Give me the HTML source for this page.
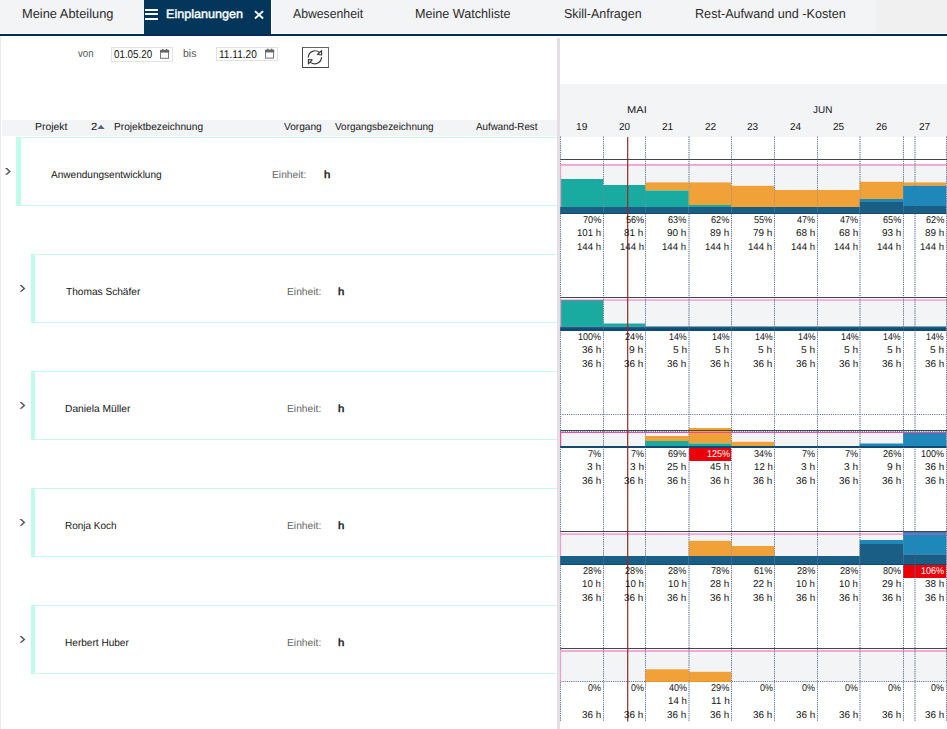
<!DOCTYPE html>
<html lang="de"><head><meta charset="utf-8"><title>Einplanungen</title>
<style>
html,body{margin:0;padding:0;background:#fff;}
#app{position:relative;width:947px;height:729px;overflow:hidden;background:#fff;font-family:"Liberation Sans", sans-serif;}
#app div{position:absolute;}
#app>div{left:0;top:0;width:0;height:0;}
#app span{position:absolute;white-space:pre;line-height:1;transform-origin:0 0;text-rendering:geometricPrecision;}
#app svg{position:absolute;left:0;top:0;overflow:visible;}
</style></head><body>
<div id="app">
<div class="frame">
<div style="left:0px;top:36px;width:1px;height:693px;background:#ececec;"></div>
<div style="left:557px;top:38px;width:3px;height:691px;background:#e6dee7;"></div>
</div>
<div class="tabbar">
<div style="left:0px;top:0px;width:876px;height:33px;background:#f3f4f6;"></div>
<div style="left:876px;top:0px;width:71px;height:33px;background:#f0f0f0;"></div>
<div style="left:0px;top:34px;width:947px;height:2px;background:#032d56;"></div>
<div style="left:144px;top:0px;width:127px;height:34px;background:#04365c;"></div>
<div style="left:271px;top:0px;width:0.7px;height:33px;background:#fff;"></div>
<div style="left:144.9px;top:8.9px;width:13.2px;height:2.1px;background:#fff;"></div>
<div style="left:144.9px;top:13.1px;width:13.2px;height:2.1px;background:#fff;"></div>
<div style="left:144.9px;top:17.9px;width:13.2px;height:2.1px;background:#fff;"></div>
<svg class="icons" width="947" height="729" viewBox="0 0 947 729" fill="none"><path d="M255 11.1 L263.1 18.5 M263.1 11.1 L255 18.5" stroke="#fff" stroke-width="1.9"/></svg>
<span style="left:21.60px;top:7.02px;font-size:13px;font-weight:400;color:#2b2b2b;transform:scaleX(0.9882)">Meine Abteilung</span>
<span style="left:165.81px;top:8.02px;font-size:12.2px;font-weight:400;color:#fff;-webkit-text-stroke:0.4px #fff;transform:scaleX(1.0345)">Einplanungen</span>
<span style="left:293.30px;top:7.02px;font-size:13px;font-weight:400;color:#2b2b2b;transform:scaleX(0.9411)">Abwesenheit</span>
<span style="left:415.32px;top:7.02px;font-size:13px;font-weight:400;color:#2b2b2b;transform:scaleX(0.9695)">Meine Watchliste</span>
<span style="left:564.11px;top:7.02px;font-size:13px;font-weight:400;color:#2b2b2b;transform:scaleX(0.9588)">Skill-Anfragen</span>
<span style="left:694.61px;top:7.02px;font-size:13px;font-weight:400;color:#2b2b2b;transform:scaleX(0.9706)">Rest-Aufwand und -Kosten</span>
</div>
<div class="toolbar">
<div style="left:110.5px;top:47px;width:62.3px;height:14.9px;box-sizing:border-box;border:1.1px solid #e2e2e2;background:#fff"></div>
<div style="left:215.8px;top:46.7px;width:62.3px;height:14.5px;box-sizing:border-box;border:1.1px solid #e2e2e2;background:#fff"></div>
<div style="left:302.1px;top:47.2px;width:26.5px;height:20.7px;box-sizing:border-box;border:1.2px solid #444;border-top-color:#666;border-right-color:#6a6a6a;background:#fff"></div>
<svg class="icons" width="947" height="729" viewBox="0 0 947 729" fill="none"><g>
<rect x="160.6" y="50.6" width="8" height="7.7" stroke="#6a6a6a" stroke-width="0.95" fill="#fff"/>
<rect x="160.05" y="49.9" width="9.1" height="2.7" fill="#646464"/>
<rect x="162" y="48.9" width="1.5" height="2" fill="#646464"/><rect x="165.8" y="48.9" width="1.5" height="2" fill="#646464"/>
</g>
<g>
<rect x="265.6" y="50.4" width="8" height="7.7" stroke="#6a6a6a" stroke-width="0.95" fill="#fff"/>
<rect x="265.05" y="49.7" width="9.1" height="2.7" fill="#646464"/>
<rect x="267" y="48.7" width="1.5" height="2" fill="#646464"/><rect x="270.8" y="48.7" width="1.5" height="2" fill="#646464"/>
</g>
<g stroke="#383838" stroke-width="1.15" fill="none" stroke-linejoin="round" stroke-linecap="round">
<path d="M308.3 57 A6.8 6.8 0 0 1 319.3 52.3"/>
<path d="M321.6 50.6 V55 L317.6 54.5 Z" fill="#fff"/>
<path d="M321.5 57.6 A6.8 6.8 0 0 1 310.6 62.4"/>
<path d="M308.4 63.8 V59.6 L312.2 59.8 Z" fill="#fff"/>
</g></svg>
<span style="left:78.20px;top:49.02px;font-size:11px;font-weight:400;color:#555;transform:scaleX(0.8821)">von</span>
<span style="left:182.95px;top:49.02px;font-size:11px;font-weight:400;color:#555;transform:scaleX(0.9516)">bis</span>
<span style="left:114.09px;top:50.02px;font-size:11.3px;font-weight:400;color:#161616;transform:scaleX(0.8673)">01.05.20</span>
<span style="left:219.37px;top:50.02px;font-size:11.3px;font-weight:400;color:#161616;transform:scaleX(0.8954)">11.11.20</span>
</div>
<div class="table">
<div style="left:2px;top:120px;width:555px;height:16px;background:#f3f4f6;"></div>
<div style="left:16px;top:137px;width:541px;height:1px;background:#cbf8ec;"></div>
<div style="left:16px;top:205px;width:541px;height:1px;background:#cbf8ec;"></div>
<div style="left:16px;top:137px;width:4.9px;height:69px;background:#c0fce9;"></div>
<div style="left:31px;top:254px;width:526px;height:1px;background:#cbf8ec;"></div>
<div style="left:31px;top:322px;width:526px;height:1px;background:#cbf8ec;"></div>
<div style="left:30.7px;top:254px;width:4.2px;height:69px;background:#c0fce9;"></div>
<div style="left:31px;top:371px;width:526px;height:1px;background:#cbf8ec;"></div>
<div style="left:31px;top:439px;width:526px;height:1px;background:#cbf8ec;"></div>
<div style="left:30.7px;top:371px;width:4.2px;height:69px;background:#c0fce9;"></div>
<div style="left:31px;top:488px;width:526px;height:1px;background:#cbf8ec;"></div>
<div style="left:31px;top:556px;width:526px;height:1px;background:#cbf8ec;"></div>
<div style="left:30.7px;top:488px;width:4.2px;height:69px;background:#c0fce9;"></div>
<div style="left:31px;top:605px;width:526px;height:1px;background:#cbf8ec;"></div>
<div style="left:31px;top:673px;width:526px;height:1px;background:#cbf8ec;"></div>
<div style="left:30.7px;top:605px;width:4.2px;height:69px;background:#c0fce9;"></div>
<svg class="icons" width="947" height="729" viewBox="0 0 947 729" fill="none"><g fill="#5a5a5a">
<path d="M5 167.9 H7.2 L10.9 171.4 L7.2 174.8 H5 L8.7 171.4 Z"/>
<path d="M19.5 284.9 H21.7 L25.4 288.4 L21.7 291.8 H19.5 L23.2 288.4 Z"/>
<path d="M19.5 401.9 H21.7 L25.4 405.4 L21.7 408.8 H19.5 L23.2 405.4 Z"/>
<path d="M19.5 518.9 H21.7 L25.4 522.4 L21.7 525.8 H19.5 L23.2 522.4 Z"/>
<path d="M19.5 635.9 H21.7 L25.4 639.4 L21.7 642.8 H19.5 L23.2 639.4 Z"/>
</g>
<path d="M97.3 129 L101 124.7 L104.7 129 Z" fill="#5a647e"/></svg>
<span style="left:34.68px;top:123.02px;font-size:10.3px;font-weight:400;color:#161616;transform:scaleX(1.0132)">Projekt</span>
<span style="left:91.17px;top:123.02px;font-size:10.3px;font-weight:400;color:#161616;transform:scaleX(1.0977)">2</span>
<span style="left:113.71px;top:123.02px;font-size:10.3px;font-weight:400;color:#161616;transform:scaleX(0.9844)">Projektbezeichnung</span>
<span style="left:284.30px;top:123.02px;font-size:10.3px;font-weight:400;color:#161616;transform:scaleX(0.9843)">Vorgang</span>
<span style="left:335.40px;top:123.02px;font-size:10.3px;font-weight:400;color:#161616;transform:scaleX(0.9668)">Vorgangsbezeichnung</span>
<span style="left:476.30px;top:123.02px;font-size:10.3px;font-weight:400;color:#161616;transform:scaleX(0.9501)">Aufwand-Rest</span>
<span style="left:51.20px;top:171.02px;font-size:10.3px;font-weight:400;color:#161616;transform:scaleX(0.9761)">Anwendungsentwicklung</span>
<span style="left:272.00px;top:171.02px;font-size:10.3px;font-weight:400;color:#666;transform:scaleX(0.9994)">Einheit:</span>
<span style="left:323.59px;top:171.02px;font-size:10.3px;font-weight:400;color:#161616;-webkit-text-stroke:0.4px #161616;transform:scaleX(1.1096)">h</span>
<span style="left:65.64px;top:288.02px;font-size:10.3px;font-weight:400;color:#161616;transform:scaleX(0.9834)">Thomas Schäfer</span>
<span style="left:286.60px;top:288.02px;font-size:10.3px;font-weight:400;color:#666;transform:scaleX(0.9994)">Einheit:</span>
<span style="left:338.19px;top:288.02px;font-size:10.3px;font-weight:400;color:#161616;-webkit-text-stroke:0.4px #161616;transform:scaleX(1.1096)">h</span>
<span style="left:65.00px;top:405.02px;font-size:10.3px;font-weight:400;color:#161616;transform:scaleX(0.9942)">Daniela Müller</span>
<span style="left:286.60px;top:405.02px;font-size:10.3px;font-weight:400;color:#666;transform:scaleX(0.9994)">Einheit:</span>
<span style="left:338.19px;top:405.02px;font-size:10.3px;font-weight:400;color:#161616;-webkit-text-stroke:0.4px #161616;transform:scaleX(1.1096)">h</span>
<span style="left:65.02px;top:522.02px;font-size:10.3px;font-weight:400;color:#161616;transform:scaleX(0.9679)">Ronja Koch</span>
<span style="left:286.60px;top:522.02px;font-size:10.3px;font-weight:400;color:#666;transform:scaleX(0.9994)">Einheit:</span>
<span style="left:338.19px;top:522.02px;font-size:10.3px;font-weight:400;color:#161616;-webkit-text-stroke:0.4px #161616;transform:scaleX(1.1096)">h</span>
<span style="left:65.01px;top:639.02px;font-size:10.3px;font-weight:400;color:#161616;transform:scaleX(0.9782)">Herbert Huber</span>
<span style="left:286.60px;top:639.02px;font-size:10.3px;font-weight:400;color:#666;transform:scaleX(0.9994)">Einheit:</span>
<span style="left:338.19px;top:639.02px;font-size:10.3px;font-weight:400;color:#161616;-webkit-text-stroke:0.4px #161616;transform:scaleX(1.1096)">h</span>
</div>
<div class="chart">
<div style="left:560px;top:84px;width:387px;height:53px;background:#f3f4f6;"></div>
<div style="left:688.8px;top:448px;width:42.5px;height:12.7px;background:#ec0008;"></div>
<div style="left:903.3px;top:565px;width:43px;height:12.7px;background:#ec0008;"></div>
<svg class="plot" width="947" height="729" viewBox="0 0 947 729">
<rect x="560.3" y="164.5" width="387" height="49.5" fill="#f3f4f6"/>
<rect x="560.3" y="299.7" width="387" height="31.30000000000001" fill="#f3f4f6"/>
<rect x="560.3" y="432.5" width="387" height="15.5" fill="#f3f4f6"/>
<rect x="560.3" y="533.7" width="387" height="31.299999999999955" fill="#f3f4f6"/>
<rect x="560.3" y="650.5" width="387" height="31.5" fill="#f3f4f6"/>
<line x1="560.5" y1="136.6" x2="560.5" y2="721.5" stroke="#66729a" stroke-width="1" stroke-dasharray="1.1 1.1"/>
<line x1="603.5" y1="136.6" x2="603.5" y2="721.5" stroke="#66729a" stroke-width="1" stroke-dasharray="1.1 1.1"/>
<line x1="645.5" y1="136.6" x2="645.5" y2="721.5" stroke="#66729a" stroke-width="1" stroke-dasharray="1.1 1.1"/>
<line x1="689.0" y1="136.6" x2="689.0" y2="721.5" stroke="#66729a" stroke-width="1" stroke-dasharray="1.1 1.1"/>
<line x1="731.5" y1="136.6" x2="731.5" y2="721.5" stroke="#66729a" stroke-width="1" stroke-dasharray="1.1 1.1"/>
<line x1="774.5" y1="136.6" x2="774.5" y2="721.5" stroke="#66729a" stroke-width="1" stroke-dasharray="1.1 1.1"/>
<line x1="817.5" y1="136.6" x2="817.5" y2="721.5" stroke="#66729a" stroke-width="1" stroke-dasharray="1.1 1.1"/>
<line x1="860.0" y1="136.6" x2="860.0" y2="721.5" stroke="#66729a" stroke-width="1" stroke-dasharray="1.1 1.1"/>
<line x1="903.5" y1="136.6" x2="903.5" y2="721.5" stroke="#66729a" stroke-width="1" stroke-dasharray="1.1 1.1"/>
<line x1="946.5" y1="136.6" x2="946.5" y2="721.5" stroke="#66729a" stroke-width="1" stroke-dasharray="1.1 1.1"/>
<line x1="915.0" y1="136.6" x2="915.0" y2="721.5" stroke="#66729a" stroke-width="1" stroke-dasharray="1.1 1.1"/>
<line x1="560.3" y1="414.5" x2="947" y2="414.5" stroke="#66729a" stroke-width="1" stroke-dasharray="1.1 1.1"/>
<line x1="560.3" y1="431.5" x2="947" y2="431.5" stroke="#66729a" stroke-width="1" stroke-dasharray="1.1 1.1"/>
<line x1="560.3" y1="681.5" x2="947" y2="681.5" stroke="#66729a" stroke-width="1" stroke-dasharray="1.1 1.1"/>
<rect x="560.2" y="179" width="43.05" height="28.0" fill="#1aaba0"/>
<rect x="560.2" y="207" width="43.05" height="7.0" fill="#1a5d85"/>
<rect x="560.2" y="213" width="43.05" height="1" fill="#0f4a73"/>
<rect x="603.2" y="185" width="42.05" height="22.0" fill="#1aaba0"/>
<rect x="603.2" y="207" width="42.05" height="7.0" fill="#1a5d85"/>
<rect x="603.2" y="213" width="42.05" height="1" fill="#0f4a73"/>
<rect x="645.2" y="182.4" width="43.55" height="8.1" fill="#f0a137"/>
<rect x="645.2" y="190.5" width="43.55" height="16.5" fill="#1aaba0"/>
<rect x="645.2" y="207" width="43.55" height="7.0" fill="#1a5d85"/>
<rect x="645.2" y="213" width="43.55" height="1" fill="#0f4a73"/>
<rect x="688.7" y="182.4" width="42.55" height="22.6" fill="#f0a137"/>
<rect x="688.7" y="205" width="42.55" height="2.0" fill="#1aaba0"/>
<rect x="688.7" y="207" width="42.55" height="7.0" fill="#1a5d85"/>
<rect x="688.7" y="213" width="42.55" height="1" fill="#0f4a73"/>
<rect x="731.2" y="185.8" width="43.05" height="21.2" fill="#f0a137"/>
<rect x="731.2" y="207" width="43.05" height="7.0" fill="#1a5d85"/>
<rect x="731.2" y="213" width="43.05" height="1" fill="#0f4a73"/>
<rect x="774.2" y="190" width="43.05" height="17.0" fill="#f0a137"/>
<rect x="774.2" y="207" width="43.05" height="7.0" fill="#1a5d85"/>
<rect x="774.2" y="213" width="43.05" height="1" fill="#0f4a73"/>
<rect x="817.2" y="190" width="42.55" height="17.0" fill="#f0a137"/>
<rect x="817.2" y="207" width="42.55" height="7.0" fill="#1a5d85"/>
<rect x="817.2" y="213" width="42.55" height="1" fill="#0f4a73"/>
<rect x="859.7" y="181.8" width="43.55" height="17.2" fill="#f0a137"/>
<rect x="859.7" y="199" width="43.55" height="3.0" fill="#1d88b9"/>
<rect x="859.7" y="202" width="43.55" height="12.0" fill="#1a5d85"/>
<rect x="859.7" y="213" width="43.55" height="1" fill="#0f4a73"/>
<rect x="903.2" y="182.4" width="43.05" height="3.4" fill="#f0a137"/>
<rect x="903.2" y="185.8" width="43.05" height="20.2" fill="#1d88b9"/>
<rect x="903.2" y="206" width="43.05" height="8.0" fill="#1a5d85"/>
<rect x="903.2" y="213" width="43.05" height="1" fill="#0f4a73"/>
<rect x="560.2" y="300" width="43.05" height="26.5" fill="#1aaba0"/>
<rect x="560.2" y="326.5" width="43.05" height="4.5" fill="#1a5d85"/>
<rect x="560.2" y="328.4" width="43.05" height="2.6" fill="#0f4a73"/>
<rect x="603.2" y="323.5" width="42.05" height="3.0" fill="#1aaba0"/>
<rect x="603.2" y="326.5" width="42.05" height="4.5" fill="#1a5d85"/>
<rect x="603.2" y="328.4" width="42.05" height="2.6" fill="#0f4a73"/>
<rect x="645.2" y="326.5" width="43.55" height="4.5" fill="#1a5d85"/>
<rect x="645.2" y="328.4" width="43.55" height="2.6" fill="#0f4a73"/>
<rect x="688.7" y="326.5" width="42.55" height="4.5" fill="#1a5d85"/>
<rect x="688.7" y="328.4" width="42.55" height="2.6" fill="#0f4a73"/>
<rect x="731.2" y="326.5" width="43.05" height="4.5" fill="#1a5d85"/>
<rect x="731.2" y="328.4" width="43.05" height="2.6" fill="#0f4a73"/>
<rect x="774.2" y="326.5" width="43.05" height="4.5" fill="#1a5d85"/>
<rect x="774.2" y="328.4" width="43.05" height="2.6" fill="#0f4a73"/>
<rect x="817.2" y="326.5" width="42.55" height="4.5" fill="#1a5d85"/>
<rect x="817.2" y="328.4" width="42.55" height="2.6" fill="#0f4a73"/>
<rect x="859.7" y="326.5" width="43.55" height="4.5" fill="#1a5d85"/>
<rect x="859.7" y="328.4" width="43.55" height="2.6" fill="#0f4a73"/>
<rect x="903.2" y="326.5" width="43.05" height="4.5" fill="#1a5d85"/>
<rect x="903.2" y="328.4" width="43.05" height="2.6" fill="#0f4a73"/>
<rect x="560.2" y="446" width="43.05" height="2.0" fill="#1a5d85"/>
<rect x="560.2" y="446.1" width="43.05" height="1.9" fill="#0f4a73"/>
<rect x="603.2" y="446" width="42.05" height="2.0" fill="#1a5d85"/>
<rect x="603.2" y="446.1" width="42.05" height="1.9" fill="#0f4a73"/>
<rect x="645.2" y="436" width="43.55" height="5.0" fill="#f0a137"/>
<rect x="645.2" y="441" width="43.55" height="5.1" fill="#1aaba0"/>
<rect x="645.2" y="446.1" width="43.55" height="1.9" fill="#1a5d85"/>
<rect x="645.2" y="446.1" width="43.55" height="1.9" fill="#0f4a73"/>
<rect x="688.7" y="428" width="42.55" height="15.5" fill="#f0a137"/>
<rect x="688.7" y="443.5" width="42.55" height="2.5" fill="#1aaba0"/>
<rect x="688.7" y="446" width="42.55" height="2.0" fill="#1a5d85"/>
<rect x="688.7" y="446.1" width="42.55" height="1.9" fill="#0f4a73"/>
<rect x="731.2" y="441.8" width="43.05" height="4.2" fill="#f0a137"/>
<rect x="731.2" y="446" width="43.05" height="2.0" fill="#1a5d85"/>
<rect x="731.2" y="446.1" width="43.05" height="1.9" fill="#0f4a73"/>
<rect x="774.2" y="446" width="43.05" height="2.0" fill="#1a5d85"/>
<rect x="774.2" y="446.1" width="43.05" height="1.9" fill="#0f4a73"/>
<rect x="817.2" y="446" width="42.55" height="2.0" fill="#1a5d85"/>
<rect x="817.2" y="446.1" width="42.55" height="1.9" fill="#0f4a73"/>
<rect x="859.7" y="443.5" width="43.55" height="2.5" fill="#1d88b9"/>
<rect x="859.7" y="446" width="43.55" height="2.0" fill="#1a5d85"/>
<rect x="859.7" y="446.1" width="43.55" height="1.9" fill="#0f4a73"/>
<rect x="903.2" y="432.5" width="43.05" height="13.5" fill="#1d88b9"/>
<rect x="903.2" y="446" width="43.05" height="2.0" fill="#1a5d85"/>
<rect x="903.2" y="446.1" width="43.05" height="1.9" fill="#0f4a73"/>
<rect x="560.2" y="556" width="43.05" height="9.0" fill="#1a5d85"/>
<rect x="560.2" y="564" width="43.05" height="1" fill="#0f4a73"/>
<rect x="603.2" y="556" width="42.05" height="9.0" fill="#1a5d85"/>
<rect x="603.2" y="564" width="42.05" height="1" fill="#0f4a73"/>
<rect x="645.2" y="556" width="43.55" height="9.0" fill="#1a5d85"/>
<rect x="645.2" y="564" width="43.55" height="1" fill="#0f4a73"/>
<rect x="688.7" y="540.8" width="42.55" height="15.2" fill="#f0a137"/>
<rect x="688.7" y="556" width="42.55" height="9.0" fill="#1a5d85"/>
<rect x="688.7" y="564" width="42.55" height="1" fill="#0f4a73"/>
<rect x="731.2" y="546" width="43.05" height="10.0" fill="#f0a137"/>
<rect x="731.2" y="556" width="43.05" height="9.0" fill="#1a5d85"/>
<rect x="731.2" y="564" width="43.05" height="1" fill="#0f4a73"/>
<rect x="774.2" y="556" width="43.05" height="9.0" fill="#1a5d85"/>
<rect x="774.2" y="564" width="43.05" height="1" fill="#0f4a73"/>
<rect x="817.2" y="556" width="42.55" height="9.0" fill="#1a5d85"/>
<rect x="817.2" y="564" width="42.55" height="1" fill="#0f4a73"/>
<rect x="859.7" y="540" width="43.55" height="4.0" fill="#1d88b9"/>
<rect x="859.7" y="544" width="43.55" height="21.0" fill="#1a5d85"/>
<rect x="859.7" y="564" width="43.55" height="1" fill="#0f4a73"/>
<rect x="903.2" y="531.7" width="43.05" height="22.6" fill="#1d88b9"/>
<rect x="903.2" y="554.3" width="43.05" height="10.7" fill="#1a5d85"/>
<rect x="903.2" y="564" width="43.05" height="1" fill="#0f4a73"/>
<rect x="645.2" y="669.3" width="43.55" height="12.7" fill="#f0a137"/>
<rect x="645.2" y="681" width="43.55" height="1" fill="#ea9424"/>
<rect x="688.7" y="671.8" width="42.55" height="10.2" fill="#f0a137"/>
<rect x="688.7" y="681" width="42.55" height="1" fill="#ea9424"/>
<line x1="560.5" y1="136.6" x2="560.5" y2="721.5" stroke="#66729a" stroke-width="1" stroke-dasharray="1.1 1.1" opacity="0.45"/>
<line x1="603.5" y1="136.6" x2="603.5" y2="721.5" stroke="#66729a" stroke-width="1" stroke-dasharray="1.1 1.1" opacity="0.45"/>
<line x1="645.5" y1="136.6" x2="645.5" y2="721.5" stroke="#66729a" stroke-width="1" stroke-dasharray="1.1 1.1" opacity="0.45"/>
<line x1="689.0" y1="136.6" x2="689.0" y2="721.5" stroke="#66729a" stroke-width="1" stroke-dasharray="1.1 1.1" opacity="0.45"/>
<line x1="731.5" y1="136.6" x2="731.5" y2="721.5" stroke="#66729a" stroke-width="1" stroke-dasharray="1.1 1.1" opacity="0.45"/>
<line x1="774.5" y1="136.6" x2="774.5" y2="721.5" stroke="#66729a" stroke-width="1" stroke-dasharray="1.1 1.1" opacity="0.45"/>
<line x1="817.5" y1="136.6" x2="817.5" y2="721.5" stroke="#66729a" stroke-width="1" stroke-dasharray="1.1 1.1" opacity="0.45"/>
<line x1="860.0" y1="136.6" x2="860.0" y2="721.5" stroke="#66729a" stroke-width="1" stroke-dasharray="1.1 1.1" opacity="0.45"/>
<line x1="903.5" y1="136.6" x2="903.5" y2="721.5" stroke="#66729a" stroke-width="1" stroke-dasharray="1.1 1.1" opacity="0.45"/>
<line x1="946.5" y1="136.6" x2="946.5" y2="721.5" stroke="#66729a" stroke-width="1" stroke-dasharray="1.1 1.1" opacity="0.45"/>
<line x1="915.0" y1="136.6" x2="915.0" y2="721.5" stroke="#66729a" stroke-width="1" stroke-dasharray="1.1 1.1" opacity="0.45"/>
<rect x="560.3" y="159" width="387" height="1" fill="#42454d"/>
<rect x="560.3" y="164" width="387" height="1.9" fill="#f452ae" opacity="0.5"/>
<rect x="560.2" y="164" width="1" height="43" fill="#f4a3d2"/>
<rect x="560.3" y="297" width="387" height="1" fill="#42454d"/>
<rect x="560.3" y="299.2" width="387" height="1.6" fill="#f452ae" opacity="0.5"/>
<rect x="560.2" y="299.2" width="1" height="27.30000000000001" fill="#f4a3d2"/>
<rect x="560.3" y="430" width="387" height="1" fill="#42454d"/>
<rect x="560.3" y="432" width="387" height="1" fill="#e6409a" opacity="0.92"/>
<rect x="560.2" y="432" width="1" height="14" fill="#e6409a"/>
<rect x="560.3" y="531" width="387" height="1" fill="#42454d"/>
<rect x="560.3" y="533.2" width="387" height="1.7" fill="#f452ae" opacity="0.5"/>
<rect x="560.2" y="533.2" width="1" height="22.799999999999955" fill="#f4a3d2"/>
<rect x="560.3" y="648" width="387" height="1" fill="#42454d"/>
<rect x="560.3" y="650" width="387" height="1.9" fill="#f452ae" opacity="0.5"/>
<rect x="560.2" y="650" width="1" height="32" fill="#f4a3d2"/>
<rect x="627.1" y="137" width="1.2" height="584.5" fill="#962a2a"/>
</svg>
<span style="left:626.53px;top:106.02px;font-size:9.9px;font-weight:400;color:#161616;transform:scaleX(1.1235)">MAI</span>
<span style="left:812.94px;top:106.02px;font-size:9.9px;font-weight:400;color:#161616;transform:scaleX(1.0062)">JUN</span>
<span style="left:575.76px;top:123.02px;font-size:10.2px;font-weight:400;color:#161616;transform:scaleX(1.0005)">19</span>
<span style="left:618.82px;top:123.02px;font-size:10.2px;font-weight:400;color:#161616;transform:scaleX(0.9705)">20</span>
<span style="left:661.69px;top:123.02px;font-size:10.2px;font-weight:400;color:#161616;transform:scaleX(0.9853)">21</span>
<span style="left:704.57px;top:123.02px;font-size:10.2px;font-weight:400;color:#161616;transform:scaleX(0.9853)">22</span>
<span style="left:747.45px;top:123.02px;font-size:10.2px;font-weight:400;color:#161616;transform:scaleX(0.9853)">23</span>
<span style="left:790.34px;top:123.02px;font-size:10.2px;font-weight:400;color:#161616;transform:scaleX(0.9705)">24</span>
<span style="left:833.21px;top:123.02px;font-size:10.2px;font-weight:400;color:#161616;transform:scaleX(0.9853)">25</span>
<span style="left:876.09px;top:123.02px;font-size:10.2px;font-weight:400;color:#161616;transform:scaleX(0.9853)">26</span>
<span style="left:918.97px;top:123.02px;font-size:10.2px;font-weight:400;color:#161616;transform:scaleX(0.9853)">27</span>
<span style="left:582.54px;top:216.02px;font-size:9.9px;font-weight:400;color:#161616;transform:scaleX(0.9278)">70%</span>
<span style="left:576.68px;top:229.02px;font-size:9.9px;font-weight:400;color:#161616;transform:scaleX(0.9733)">101 h</span>
<span style="left:576.68px;top:243.02px;font-size:9.9px;font-weight:400;color:#161616;transform:scaleX(0.9733)">144 h</span>
<span style="left:625.59px;top:216.02px;font-size:9.9px;font-weight:400;color:#161616;transform:scaleX(0.9203)">56%</span>
<span style="left:624.41px;top:229.02px;font-size:9.9px;font-weight:400;color:#161616;transform:scaleX(1.0015)">81 h</span>
<span style="left:619.58px;top:243.02px;font-size:9.9px;font-weight:400;color:#161616;transform:scaleX(0.9733)">144 h</span>
<span style="left:668.34px;top:216.02px;font-size:9.9px;font-weight:400;color:#161616;transform:scaleX(0.9278)">63%</span>
<span style="left:667.15px;top:229.02px;font-size:9.9px;font-weight:400;color:#161616;transform:scaleX(1.0100)">90 h</span>
<span style="left:662.48px;top:243.02px;font-size:9.9px;font-weight:400;color:#161616;transform:scaleX(0.9733)">144 h</span>
<span style="left:711.24px;top:216.02px;font-size:9.9px;font-weight:400;color:#161616;transform:scaleX(0.9278)">62%</span>
<span style="left:710.21px;top:229.02px;font-size:9.9px;font-weight:400;color:#161616;transform:scaleX(1.0015)">89 h</span>
<span style="left:705.38px;top:243.02px;font-size:9.9px;font-weight:400;color:#161616;transform:scaleX(0.9733)">144 h</span>
<span style="left:754.29px;top:216.02px;font-size:9.9px;font-weight:400;color:#161616;transform:scaleX(0.9203)">55%</span>
<span style="left:752.95px;top:229.02px;font-size:9.9px;font-weight:400;color:#161616;transform:scaleX(1.0100)">79 h</span>
<span style="left:748.28px;top:243.02px;font-size:9.9px;font-weight:400;color:#161616;transform:scaleX(0.9733)">144 h</span>
<span style="left:797.33px;top:216.02px;font-size:9.9px;font-weight:400;color:#161616;transform:scaleX(0.9130)">47%</span>
<span style="left:795.85px;top:229.02px;font-size:9.9px;font-weight:400;color:#161616;transform:scaleX(1.0100)">68 h</span>
<span style="left:791.18px;top:243.02px;font-size:9.9px;font-weight:400;color:#161616;transform:scaleX(0.9733)">144 h</span>
<span style="left:840.23px;top:216.02px;font-size:9.9px;font-weight:400;color:#161616;transform:scaleX(0.9130)">47%</span>
<span style="left:838.75px;top:229.02px;font-size:9.9px;font-weight:400;color:#161616;transform:scaleX(1.0100)">68 h</span>
<span style="left:834.08px;top:243.02px;font-size:9.9px;font-weight:400;color:#161616;transform:scaleX(0.9733)">144 h</span>
<span style="left:882.84px;top:216.02px;font-size:9.9px;font-weight:400;color:#161616;transform:scaleX(0.9278)">65%</span>
<span style="left:881.65px;top:229.02px;font-size:9.9px;font-weight:400;color:#161616;transform:scaleX(1.0100)">93 h</span>
<span style="left:876.98px;top:243.02px;font-size:9.9px;font-weight:400;color:#161616;transform:scaleX(0.9733)">144 h</span>
<span style="left:925.74px;top:216.02px;font-size:9.9px;font-weight:400;color:#161616;transform:scaleX(0.9278)">62%</span>
<span style="left:924.71px;top:229.02px;font-size:9.9px;font-weight:400;color:#161616;transform:scaleX(1.0015)">89 h</span>
<span style="left:919.88px;top:243.02px;font-size:9.9px;font-weight:400;color:#161616;transform:scaleX(0.9733)">144 h</span>
<span style="left:577.87px;top:333.02px;font-size:9.9px;font-weight:400;color:#161616;transform:scaleX(0.9104)">100%</span>
<span style="left:581.51px;top:346.02px;font-size:9.9px;font-weight:400;color:#161616;transform:scaleX(1.0015)">36 h</span>
<span style="left:581.51px;top:360.02px;font-size:9.9px;font-weight:400;color:#161616;transform:scaleX(1.0015)">36 h</span>
<span style="left:625.44px;top:333.02px;font-size:9.9px;font-weight:400;color:#161616;transform:scaleX(0.9278)">24%</span>
<span style="left:629.48px;top:346.02px;font-size:9.9px;font-weight:400;color:#161616;transform:scaleX(1.0351)">9 h</span>
<span style="left:624.41px;top:360.02px;font-size:9.9px;font-weight:400;color:#161616;transform:scaleX(1.0015)">36 h</span>
<span style="left:668.91px;top:333.02px;font-size:9.9px;font-weight:400;color:#161616;transform:scaleX(0.8984)">14%</span>
<span style="left:672.54px;top:346.02px;font-size:9.9px;font-weight:400;color:#161616;transform:scaleX(1.0227)">5 h</span>
<span style="left:667.31px;top:360.02px;font-size:9.9px;font-weight:400;color:#161616;transform:scaleX(1.0015)">36 h</span>
<span style="left:711.81px;top:333.02px;font-size:9.9px;font-weight:400;color:#161616;transform:scaleX(0.8984)">14%</span>
<span style="left:715.44px;top:346.02px;font-size:9.9px;font-weight:400;color:#161616;transform:scaleX(1.0227)">5 h</span>
<span style="left:710.21px;top:360.02px;font-size:9.9px;font-weight:400;color:#161616;transform:scaleX(1.0015)">36 h</span>
<span style="left:754.71px;top:333.02px;font-size:9.9px;font-weight:400;color:#161616;transform:scaleX(0.8984)">14%</span>
<span style="left:758.34px;top:346.02px;font-size:9.9px;font-weight:400;color:#161616;transform:scaleX(1.0227)">5 h</span>
<span style="left:753.11px;top:360.02px;font-size:9.9px;font-weight:400;color:#161616;transform:scaleX(1.0015)">36 h</span>
<span style="left:797.61px;top:333.02px;font-size:9.9px;font-weight:400;color:#161616;transform:scaleX(0.8984)">14%</span>
<span style="left:801.24px;top:346.02px;font-size:9.9px;font-weight:400;color:#161616;transform:scaleX(1.0227)">5 h</span>
<span style="left:796.01px;top:360.02px;font-size:9.9px;font-weight:400;color:#161616;transform:scaleX(1.0015)">36 h</span>
<span style="left:840.51px;top:333.02px;font-size:9.9px;font-weight:400;color:#161616;transform:scaleX(0.8984)">14%</span>
<span style="left:844.14px;top:346.02px;font-size:9.9px;font-weight:400;color:#161616;transform:scaleX(1.0227)">5 h</span>
<span style="left:838.91px;top:360.02px;font-size:9.9px;font-weight:400;color:#161616;transform:scaleX(1.0015)">36 h</span>
<span style="left:883.41px;top:333.02px;font-size:9.9px;font-weight:400;color:#161616;transform:scaleX(0.8984)">14%</span>
<span style="left:887.04px;top:346.02px;font-size:9.9px;font-weight:400;color:#161616;transform:scaleX(1.0227)">5 h</span>
<span style="left:881.81px;top:360.02px;font-size:9.9px;font-weight:400;color:#161616;transform:scaleX(1.0015)">36 h</span>
<span style="left:926.31px;top:333.02px;font-size:9.9px;font-weight:400;color:#161616;transform:scaleX(0.8984)">14%</span>
<span style="left:929.94px;top:346.02px;font-size:9.9px;font-weight:400;color:#161616;transform:scaleX(1.0227)">5 h</span>
<span style="left:924.71px;top:360.02px;font-size:9.9px;font-weight:400;color:#161616;transform:scaleX(1.0015)">36 h</span>
<span style="left:587.78px;top:450.02px;font-size:9.9px;font-weight:400;color:#161616;transform:scaleX(0.9181)">7%</span>
<span style="left:586.74px;top:463.02px;font-size:9.9px;font-weight:400;color:#161616;transform:scaleX(1.0227)">3 h</span>
<span style="left:581.51px;top:477.02px;font-size:9.9px;font-weight:400;color:#161616;transform:scaleX(1.0015)">36 h</span>
<span style="left:630.68px;top:450.02px;font-size:9.9px;font-weight:400;color:#161616;transform:scaleX(0.9181)">7%</span>
<span style="left:629.64px;top:463.02px;font-size:9.9px;font-weight:400;color:#161616;transform:scaleX(1.0227)">3 h</span>
<span style="left:624.41px;top:477.02px;font-size:9.9px;font-weight:400;color:#161616;transform:scaleX(1.0015)">36 h</span>
<span style="left:668.34px;top:450.02px;font-size:9.9px;font-weight:400;color:#161616;transform:scaleX(0.9278)">69%</span>
<span style="left:667.15px;top:463.02px;font-size:9.9px;font-weight:400;color:#161616;transform:scaleX(1.0100)">25 h</span>
<span style="left:667.31px;top:477.02px;font-size:9.9px;font-weight:400;color:#161616;transform:scaleX(1.0015)">36 h</span>
<span style="left:706.57px;top:450.02px;font-size:9.9px;font-weight:400;color:#fff;transform:scaleX(0.9104)">125%</span>
<span style="left:710.37px;top:463.02px;font-size:9.9px;font-weight:400;color:#161616;transform:scaleX(0.9931)">45 h</span>
<span style="left:710.21px;top:477.02px;font-size:9.9px;font-weight:400;color:#161616;transform:scaleX(1.0015)">36 h</span>
<span style="left:754.29px;top:450.02px;font-size:9.9px;font-weight:400;color:#161616;transform:scaleX(0.9203)">34%</span>
<span style="left:753.51px;top:463.02px;font-size:9.9px;font-weight:400;color:#161616;transform:scaleX(0.9799)">12 h</span>
<span style="left:753.11px;top:477.02px;font-size:9.9px;font-weight:400;color:#161616;transform:scaleX(1.0015)">36 h</span>
<span style="left:802.28px;top:450.02px;font-size:9.9px;font-weight:400;color:#161616;transform:scaleX(0.9181)">7%</span>
<span style="left:801.24px;top:463.02px;font-size:9.9px;font-weight:400;color:#161616;transform:scaleX(1.0227)">3 h</span>
<span style="left:796.01px;top:477.02px;font-size:9.9px;font-weight:400;color:#161616;transform:scaleX(1.0015)">36 h</span>
<span style="left:845.18px;top:450.02px;font-size:9.9px;font-weight:400;color:#161616;transform:scaleX(0.9181)">7%</span>
<span style="left:844.14px;top:463.02px;font-size:9.9px;font-weight:400;color:#161616;transform:scaleX(1.0227)">3 h</span>
<span style="left:838.91px;top:477.02px;font-size:9.9px;font-weight:400;color:#161616;transform:scaleX(1.0015)">36 h</span>
<span style="left:882.84px;top:450.02px;font-size:9.9px;font-weight:400;color:#161616;transform:scaleX(0.9278)">26%</span>
<span style="left:886.88px;top:463.02px;font-size:9.9px;font-weight:400;color:#161616;transform:scaleX(1.0351)">9 h</span>
<span style="left:881.81px;top:477.02px;font-size:9.9px;font-weight:400;color:#161616;transform:scaleX(1.0015)">36 h</span>
<span style="left:921.07px;top:450.02px;font-size:9.9px;font-weight:400;color:#161616;transform:scaleX(0.9104)">100%</span>
<span style="left:924.71px;top:463.02px;font-size:9.9px;font-weight:400;color:#161616;transform:scaleX(1.0015)">36 h</span>
<span style="left:924.71px;top:477.02px;font-size:9.9px;font-weight:400;color:#161616;transform:scaleX(1.0015)">36 h</span>
<span style="left:582.54px;top:567.02px;font-size:9.9px;font-weight:400;color:#161616;transform:scaleX(0.9278)">28%</span>
<span style="left:581.91px;top:580.02px;font-size:9.9px;font-weight:400;color:#161616;transform:scaleX(0.9799)">10 h</span>
<span style="left:581.51px;top:594.02px;font-size:9.9px;font-weight:400;color:#161616;transform:scaleX(1.0015)">36 h</span>
<span style="left:625.44px;top:567.02px;font-size:9.9px;font-weight:400;color:#161616;transform:scaleX(0.9278)">28%</span>
<span style="left:624.81px;top:580.02px;font-size:9.9px;font-weight:400;color:#161616;transform:scaleX(0.9799)">10 h</span>
<span style="left:624.41px;top:594.02px;font-size:9.9px;font-weight:400;color:#161616;transform:scaleX(1.0015)">36 h</span>
<span style="left:668.34px;top:567.02px;font-size:9.9px;font-weight:400;color:#161616;transform:scaleX(0.9278)">28%</span>
<span style="left:667.71px;top:580.02px;font-size:9.9px;font-weight:400;color:#161616;transform:scaleX(0.9799)">10 h</span>
<span style="left:667.31px;top:594.02px;font-size:9.9px;font-weight:400;color:#161616;transform:scaleX(1.0015)">36 h</span>
<span style="left:711.24px;top:567.02px;font-size:9.9px;font-weight:400;color:#161616;transform:scaleX(0.9278)">78%</span>
<span style="left:710.05px;top:580.02px;font-size:9.9px;font-weight:400;color:#161616;transform:scaleX(1.0100)">28 h</span>
<span style="left:710.21px;top:594.02px;font-size:9.9px;font-weight:400;color:#161616;transform:scaleX(1.0015)">36 h</span>
<span style="left:754.14px;top:567.02px;font-size:9.9px;font-weight:400;color:#161616;transform:scaleX(0.9278)">61%</span>
<span style="left:752.95px;top:580.02px;font-size:9.9px;font-weight:400;color:#161616;transform:scaleX(1.0100)">22 h</span>
<span style="left:753.11px;top:594.02px;font-size:9.9px;font-weight:400;color:#161616;transform:scaleX(1.0015)">36 h</span>
<span style="left:797.04px;top:567.02px;font-size:9.9px;font-weight:400;color:#161616;transform:scaleX(0.9278)">28%</span>
<span style="left:796.41px;top:580.02px;font-size:9.9px;font-weight:400;color:#161616;transform:scaleX(0.9799)">10 h</span>
<span style="left:796.01px;top:594.02px;font-size:9.9px;font-weight:400;color:#161616;transform:scaleX(1.0015)">36 h</span>
<span style="left:839.94px;top:567.02px;font-size:9.9px;font-weight:400;color:#161616;transform:scaleX(0.9278)">28%</span>
<span style="left:839.31px;top:580.02px;font-size:9.9px;font-weight:400;color:#161616;transform:scaleX(0.9799)">10 h</span>
<span style="left:838.91px;top:594.02px;font-size:9.9px;font-weight:400;color:#161616;transform:scaleX(1.0015)">36 h</span>
<span style="left:882.99px;top:567.02px;font-size:9.9px;font-weight:400;color:#161616;transform:scaleX(0.9203)">80%</span>
<span style="left:881.65px;top:580.02px;font-size:9.9px;font-weight:400;color:#161616;transform:scaleX(1.0100)">29 h</span>
<span style="left:881.81px;top:594.02px;font-size:9.9px;font-weight:400;color:#161616;transform:scaleX(1.0015)">36 h</span>
<span style="left:921.07px;top:567.02px;font-size:9.9px;font-weight:400;color:#fff;transform:scaleX(0.9104)">106%</span>
<span style="left:924.71px;top:580.02px;font-size:9.9px;font-weight:400;color:#161616;transform:scaleX(1.0015)">38 h</span>
<span style="left:924.71px;top:594.02px;font-size:9.9px;font-weight:400;color:#161616;transform:scaleX(1.0015)">36 h</span>
<span style="left:587.93px;top:684.02px;font-size:9.9px;font-weight:400;color:#161616;transform:scaleX(0.9077)">0%</span>
<span style="left:581.51px;top:711.02px;font-size:9.9px;font-weight:400;color:#161616;transform:scaleX(1.0015)">36 h</span>
<span style="left:630.83px;top:684.02px;font-size:9.9px;font-weight:400;color:#161616;transform:scaleX(0.9077)">0%</span>
<span style="left:624.41px;top:711.02px;font-size:9.9px;font-weight:400;color:#161616;transform:scaleX(1.0015)">36 h</span>
<span style="left:668.63px;top:684.02px;font-size:9.9px;font-weight:400;color:#161616;transform:scaleX(0.9130)">40%</span>
<span style="left:667.71px;top:697.02px;font-size:9.9px;font-weight:400;color:#161616;transform:scaleX(0.9799)">14 h</span>
<span style="left:667.31px;top:711.02px;font-size:9.9px;font-weight:400;color:#161616;transform:scaleX(1.0015)">36 h</span>
<span style="left:711.24px;top:684.02px;font-size:9.9px;font-weight:400;color:#161616;transform:scaleX(0.9278)">29%</span>
<span style="left:710.59px;top:697.02px;font-size:9.9px;font-weight:400;color:#161616;transform:scaleX(1.0214)">11 h</span>
<span style="left:710.21px;top:711.02px;font-size:9.9px;font-weight:400;color:#161616;transform:scaleX(1.0015)">36 h</span>
<span style="left:759.53px;top:684.02px;font-size:9.9px;font-weight:400;color:#161616;transform:scaleX(0.9077)">0%</span>
<span style="left:753.11px;top:711.02px;font-size:9.9px;font-weight:400;color:#161616;transform:scaleX(1.0015)">36 h</span>
<span style="left:802.43px;top:684.02px;font-size:9.9px;font-weight:400;color:#161616;transform:scaleX(0.9077)">0%</span>
<span style="left:796.01px;top:711.02px;font-size:9.9px;font-weight:400;color:#161616;transform:scaleX(1.0015)">36 h</span>
<span style="left:845.33px;top:684.02px;font-size:9.9px;font-weight:400;color:#161616;transform:scaleX(0.9077)">0%</span>
<span style="left:838.91px;top:711.02px;font-size:9.9px;font-weight:400;color:#161616;transform:scaleX(1.0015)">36 h</span>
<span style="left:888.23px;top:684.02px;font-size:9.9px;font-weight:400;color:#161616;transform:scaleX(0.9077)">0%</span>
<span style="left:881.81px;top:711.02px;font-size:9.9px;font-weight:400;color:#161616;transform:scaleX(1.0015)">36 h</span>
<span style="left:931.13px;top:684.02px;font-size:9.9px;font-weight:400;color:#161616;transform:scaleX(0.9077)">0%</span>
<span style="left:924.71px;top:711.02px;font-size:9.9px;font-weight:400;color:#161616;transform:scaleX(1.0015)">36 h</span>
</div>
</div>
</body></html>
